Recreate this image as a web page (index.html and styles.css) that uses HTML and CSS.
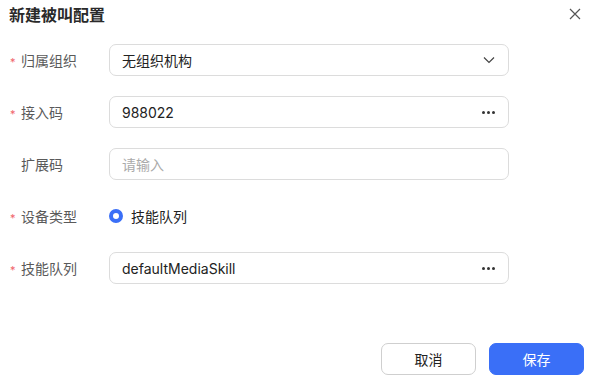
FILE: index.html
```html
<!DOCTYPE html>
<html lang="zh-CN">
<head>
    <meta charset="UTF-8">
    <title>新建被叫配置</title>
    <link rel="stylesheet" href="styles.css">
</head>
<body>
    <div class="dialog">
        <div class="header">
            <h2>新建被叫配置</h2>
            <span class="close">
                <svg width="12" height="12" viewBox="0 0 12 12"><path d="M1 1L11 11M11 1L1 11" stroke="#555" stroke-width="1.2" fill="none"/></svg>
            </span>
        </div>

        <div class="form">
            <div class="row">
                <label class="required">归属组织</label>
                <div class="field">
                    <span class="value">无组织机构</span>
                    <svg class="icon" width="12" height="8" viewBox="0 0 12 8"><path d="M1 1.5L6 6.5L11 1.5" stroke="#444" stroke-width="1.2" fill="none"/></svg>
                </div>
            </div>
            <div class="row">
                <label class="required">接入码</label>
                <div class="field">
                    <span class="value">988022</span>
                    <span class="dots"><i></i><i></i><i></i></span>
                </div>
            </div>
            <div class="row">
                <label>扩展码</label>
                <div class="field">
                    <span class="placeholder">请输入</span>
                </div>
            </div>
            <div class="row">
                <label class="required">设备类型</label>
                <div class="radio">
                    <span class="dot"></span>
                    <span>技能队列</span>
                </div>
            </div>
            <div class="row">
                <label class="required">技能队列</label>
                <div class="field">
                    <span class="value">defaultMediaSkill</span>
                    <span class="dots"><i></i><i></i><i></i></span>
                </div>
            </div>
        </div>

        <div class="footer">
            <button class="btn">取消</button>
            <button class="btn primary">保存</button>
        </div>
    </div>
</body>
</html>
```

FILE: styles.css
```css
body {
    margin: 0;
    font-family: "Inter", "Noto Sans CJK SC", sans-serif;
    background: #fff;
    color: #222;
}
.dialog {
    width: 591px;
    height: 382px;
    position: relative;
}
.header {
    display: flex;
    justify-content: space-between;
    align-items: center;
    height: 30px;
    padding: 0 10px 0 9px;
}
.header h2 {
    margin: 0;
    font-size: 16px;
    font-weight: bold;
    color: #2a2a2a;
    line-height: 30px;
}
.close {
    display: flex;
    margin-top: -2px;
}
.form {
    padding-top: 14px;
    display: flex;
    flex-direction: column;
    gap: 20px;
}
.row {
    display: flex;
    align-items: center;
    height: 32px;
}
.row label {
    width: 88px;
    padding-left: 21px;
    font-size: 14px;
    color: #5a5a5a;
    position: relative;
}
.required::before {
    content: "*";
    color: #f0646c;
    position: absolute;
    left: 10px;
    top: 5px;
    font-size: 11px;
}
.field {
    box-sizing: border-box;
    width: 400px;
    height: 32px;
    border: 1px solid #dcdcdc;
    border-radius: 7px;
    display: flex;
    align-items: center;
    justify-content: space-between;
    padding: 0 12px 0 12px;
    font-size: 14px;
}
.placeholder { color: #aaa; }
.icon { margin-right: 1px; }
.dots {
    display: flex;
    gap: 2px;
    margin-right: 1px;
}
.dots i {
    width: 3px;
    height: 3px;
    border-radius: 50%;
    background: #333;
}
.radio {
    display: flex;
    align-items: center;
    gap: 8px;
    font-size: 14px;
}
.radio .dot {
    box-sizing: border-box;
    width: 14px;
    height: 14px;
    border-radius: 50%;
    border: 4px solid #3a6ff7;
    background: #fff;
}
.footer {
    position: absolute;
    right: 7px;
    bottom: 7px;
    display: flex;
    gap: 13px;
}
.btn {
    width: 95px;
    height: 32px;
    border: 1px solid #cfcfcf;
    border-radius: 7px;
    background: #fff;
    font-family: inherit;
    font-size: 14px;
    color: #222;
}
.btn.primary {
    background: #3a6ff7;
    border-color: #3a6ff7;
    color: #fff;
}
```
